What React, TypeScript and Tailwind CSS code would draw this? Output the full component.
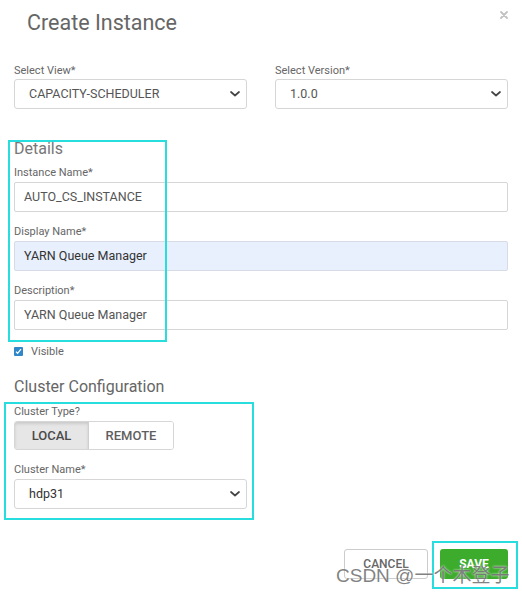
const Chevron = () => (
  <svg width="10" height="6" viewBox="0 0 10 6" className="shrink-0">
    <path d="M1 1l4 3.5L9 1" fill="none" stroke="#444" strokeWidth="1.7" strokeLinecap="round" strokeLinejoin="round" />
  </svg>
)

const Label = ({ children, className = '' }: { children: React.ReactNode; className?: string }) => (
  <div className={`text-[11px] leading-[13px] text-[#666] ${className}`}>{children}</div>
)

const SelectBox = ({ value, dark = false }: { value: string; dark?: boolean }) => (
  <div className="flex h-[30px] items-center justify-between rounded-[3px] border border-[#d6d6d6] bg-white pl-[14px] pr-[6px]">
    <span className={`text-[12.5px] leading-[28px] ${dark ? 'text-[#333]' : 'text-[#555]'}`}>{value}</span>
    <Chevron />
  </div>
)

const TextBox = ({ value, filled = false }: { value: string; filled?: boolean }) => (
  <div
    className={`flex h-[30px] items-center rounded-[2px] border px-[9px] text-[12.5px] leading-[28px] ${
      filled ? 'border-[#d6dbe6] bg-[#e8f0fe] text-[#333]' : 'border-[#d6d6d6] bg-white text-[#555]'
    }`}
  >
    {value}
  </div>
)

export default function App() {
  return (
    <div className="relative h-[595px] w-[522px] overflow-hidden bg-white font-['Roboto','Liberation_Sans',sans-serif]">
      {/* header */}
      <div className="flex items-start justify-between pl-[27px] pr-[14px] pt-[10px]">
        <h1 className="text-[21.5px] font-normal leading-[26px] text-[#666]">Create Instance</h1>
        <svg width="8" height="8" viewBox="0 0 8 8" className="mt-[1px]">
          <path d="M1 1l6 6M7 1L1 7" stroke="#c2c2c2" strokeWidth="1.8" strokeLinecap="round" />
        </svg>
      </div>

      <div className="px-[14px]">
        {/* view + version */}
        <div className="mt-[28px] flex gap-[28px]">
          <div className="w-[233px]">
            <Label>Select View*</Label>
            <div className="mt-[2px]">
              <SelectBox value="CAPACITY-SCHEDULER" />
            </div>
          </div>
          <div className="w-[233px]">
            <Label>Select Version*</Label>
            <div className="mt-[2px]">
              <SelectBox value="1.0.0" />
            </div>
          </div>
        </div>

        {/* details */}
        <h2 className="mt-[30px] text-[16px] font-normal leading-[20px] text-[#777]">Details</h2>
        <Label className="mt-[7px]">Instance Name*</Label>
        <div className="mt-[3px]">
          <TextBox value="AUTO_CS_INSTANCE" />
        </div>
        <Label className="mt-[13px]">Display Name*</Label>
        <div className="mt-[3px]">
          <TextBox value="YARN Queue Manager" filled />
        </div>
        <Label className="mt-[13px]">Description*</Label>
        <div className="mt-[3px]">
          <TextBox value="YARN Queue Manager" />
        </div>

        <div className="mt-[15px] flex items-center gap-[8px]">
          <span className="flex h-[9px] w-[9px] items-center justify-center rounded-[1px] bg-[#2f86c8]">
            <svg width="7" height="7" viewBox="0 0 7 7">
              <path d="M1 3.6l1.6 1.7L6 1.2" fill="none" stroke="#fff" strokeWidth="1.3" />
            </svg>
          </span>
          <span className="text-[11px] leading-[13px] text-[#666]">Visible</span>
        </div>

        {/* cluster */}
        <h2 className="mt-[19px] text-[16px] font-normal leading-[20px] text-[#666]">Cluster Configuration</h2>
        <Label className="mt-[8px]">Cluster Type?</Label>
        <div className="mt-[3px] flex h-[29px] w-[160px] overflow-hidden rounded-[3px] border border-[#d6d6d6]">
          <div className="flex w-[74px] items-center justify-center border-r border-[#cfcfcf] bg-[#e6e6e6] text-[13px] font-medium text-[#4a4a4a] shadow-[inset_0_2px_3px_rgba(0,0,0,0.12)]">
            LOCAL
          </div>
          <div className="flex flex-1 items-center justify-center bg-white text-[13px] font-medium text-[#5f5f5f]">
            REMOTE
          </div>
        </div>
        <Label className="mt-[13px]">Cluster Name*</Label>
        <div className="mt-[3px] w-[233px]">
          <SelectBox value="hdp31" dark />
        </div>

        {/* footer */}
        <div className="mt-[40px] flex justify-end gap-[12px]">
          <button className="h-[30px] w-[84px] rounded-[3px] border border-[#cccccc] bg-white text-[12px] font-medium text-[#666]">
            CANCEL
          </button>
          <button className="h-[30px] w-[68px] rounded-[3px] bg-[#3dac2c] text-[12px] font-bold text-white">
            SAVE
          </button>
        </div>
      </div>

      {/* annotation boxes */}
      <div className="pointer-events-none absolute left-[8px] top-[140px] h-[202px] w-[159px] border-2 border-[#28dddd]" />
      <div className="pointer-events-none absolute left-[4px] top-[402px] h-[118px] w-[250px] border-2 border-[#28dddd]" />
      <div className="pointer-events-none absolute left-[432px] top-[541px] h-[48px] w-[86px] border-2 border-[#28dddd]" />

      {/* watermark */}
      <div className="pointer-events-none absolute left-[336px] top-[565px] whitespace-nowrap font-['Liberation_Sans','Noto_Sans_CJK_SC',sans-serif] text-[19px] leading-[22px] text-[#6b6b6b]/85 [text-shadow:0_0_2px_#fff]">
        CSDN @一个木登子
      </div>
    </div>
  )
}
